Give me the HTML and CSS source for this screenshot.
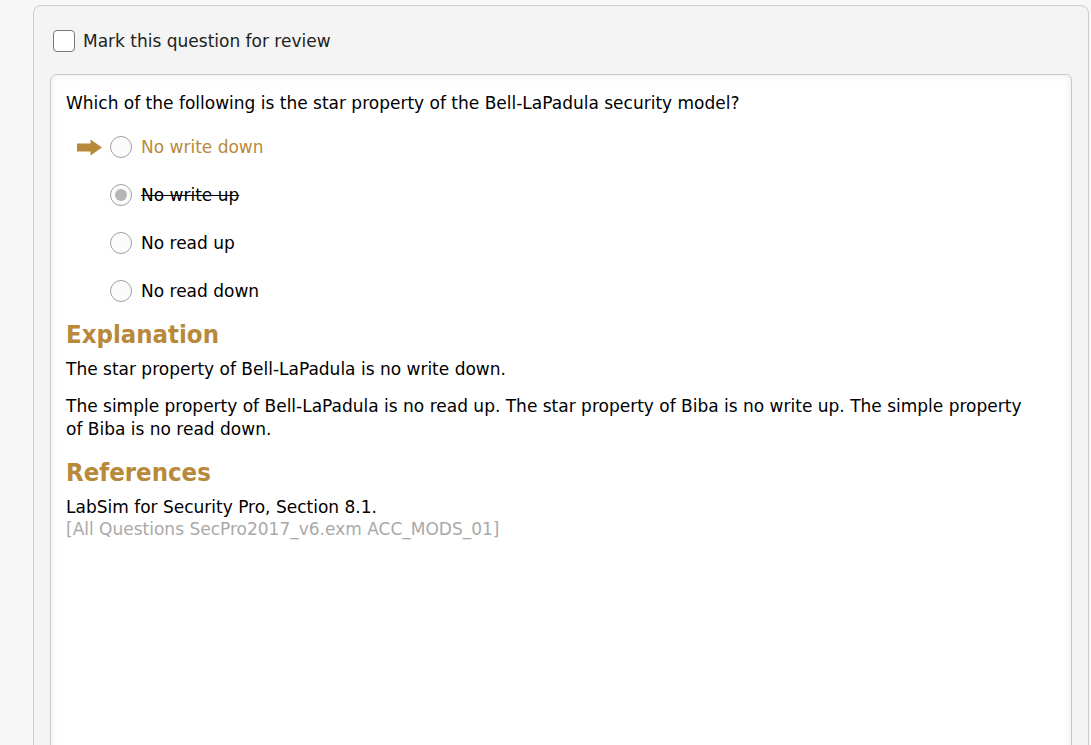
FILE: index.html
```html
<!DOCTYPE html>
<html>
<head>
<meta charset="utf-8">
<link rel="stylesheet" href="styles.css">
</head>
<body>
<div class="page">
  <div class="panel">
    <label class="review">
      <span class="checkbox"></span>
      <span class="review-text">Mark this question for review</span>
    </label>
    <div class="card">
      <p class="question">Which of the following is the star property of the Bell-LaPadula security model?</p>
      <ul class="options">
        <li class="option correct">
          <span class="marker">
            <svg width="25" height="17" viewBox="0 0 25 17"><path d="M0 4.5 H13.5 V0.5 L25 8.5 L13.5 16.5 V12.5 H0 Z" fill="#b8893b"/></svg>
          </span>
          <span class="radio"></span>
          <span class="label">No write down</span>
        </li>
        <li class="option">
          <span class="marker"></span>
          <span class="radio checked"></span>
          <span class="label struck">No write up</span>
        </li>
        <li class="option">
          <span class="marker"></span>
          <span class="radio"></span>
          <span class="label">No read up</span>
        </li>
        <li class="option">
          <span class="marker"></span>
          <span class="radio"></span>
          <span class="label">No read down</span>
        </li>
      </ul>
      <h2 class="heading">Explanation</h2>
      <p class="para first">The star property of Bell-LaPadula is no write down.</p>
      <p class="para">The simple property of Bell-LaPadula is no read up. The star property of Biba is no write up. The simple property of Biba is no read down.</p>
      <h2 class="heading refs">References</h2>
      <p class="ref">LabSim for Security Pro, Section 8.1.</p>
      <p class="ref meta">[All Questions SecPro2017_v6.exm ACC_MODS_01]</p>
    </div>
  </div>
</div>
</body>
</html>
```
FILE: styles.css
```css
html, body {
  margin: 0;
  padding: 0;
  height: 100%;
  overflow: hidden;
}
body {
  background: #f7f7f7;
  font-family: "DejaVu Sans", sans-serif;
  font-size: 17px;
  color: #000;
}
.page {
  padding: 5px 2px 0 33px;
}
.panel {
  background: #f4f4f4;
  border: 1px solid #cdcdcd;
  border-radius: 8px;
  padding: 24px 16px 0 16px;
  height: 900px;
}
.review {
  display: flex;
  align-items: center;
  gap: 8px;
  margin-left: 3px;
  height: 22px;
}
.checkbox {
  width: 20px;
  height: 20px;
  border: 1px solid #7a7a7a;
  border-radius: 4px;
  background: #fff;
}
.review-text {
  color: #222;
  line-height: 22px;
}
.card {
  margin-top: 22px;
  background: #fff;
  border: 1px solid #c9c9c9;
  border-radius: 6px;
  box-shadow: inset 0 0 9px rgba(0,0,0,0.09);
  padding: 18px 36px 0 15px;
  height: 800px;
}
.question {
  margin: 0;
  line-height: 20px;
}
.options {
  list-style: none;
  margin: 10px 0 0 0;
  padding: 0;
}
.option {
  display: flex;
  align-items: center;
  height: 48px;
}
.marker {
  width: 44px;
  display: flex;
  justify-content: flex-end;
  padding-right: 8px;
  box-sizing: border-box;
}
.marker svg { display: block; }
.radio {
  width: 20px;
  height: 20px;
  border: 1px solid #a0a0a0;
  border-radius: 50%;
  background: #fbfbfb;
  display: flex;
  align-items: center;
  justify-content: center;
  margin-right: 9px;
}
.radio.checked::after {
  content: "";
  width: 12px;
  height: 12px;
  border-radius: 50%;
  background: #b5b5b5;
}
.label { line-height: 22px; }
.correct .label { color: #b8893b; }
.struck { text-decoration: line-through; }
.heading {
  margin: 4px 0 0 0;
  font-family: "DejaVu Sans Condensed", "DejaVu Sans", sans-serif;
  font-size: 25.5px;
  line-height: 30px;
  font-weight: bold;
  color: #b8893b;
}
.para {
  margin: 14px 0 0 0;
  line-height: 23px;
}
.para.first { margin-top: 9px; }
.heading.refs { margin-top: 16px; }
.ref {
  margin: 0;
  line-height: 22px;
}
.heading.refs + .ref { margin-top: 9px; }
.meta { color: #a9a9a9; }
```
